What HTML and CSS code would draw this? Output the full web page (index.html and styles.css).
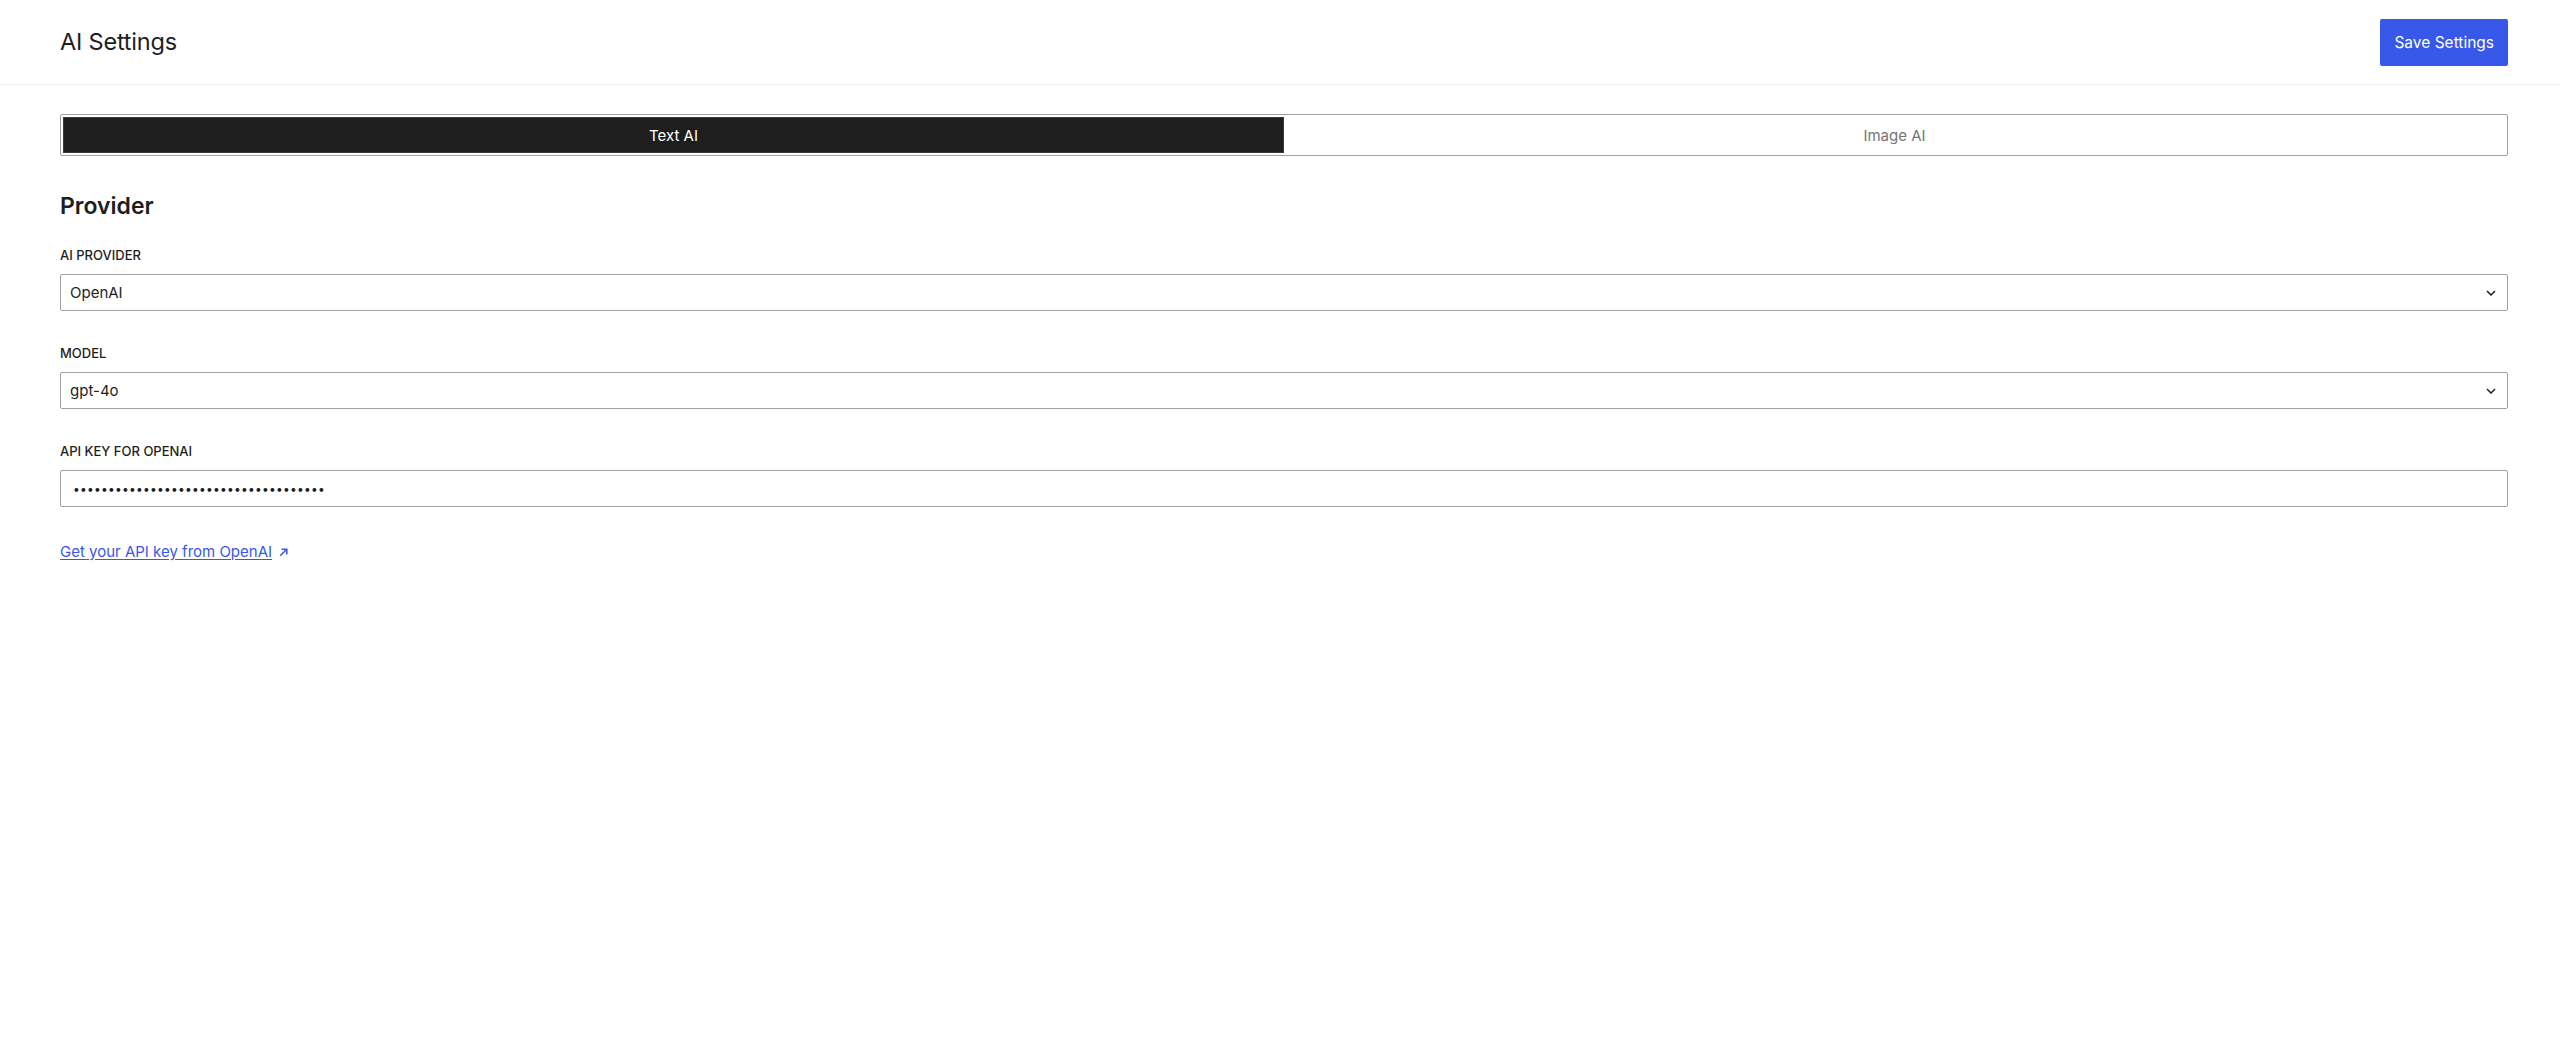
FILE: index.html
```html
<!DOCTYPE html>
<html lang="en">
<head>
<meta charset="utf-8">
<title>AI Settings</title>
<link rel="stylesheet" href="styles.css">
</head>
<body>
<header class="topbar">
  <h1 class="page-title">AI Settings</h1>
  <button class="btn-primary" type="button">Save Settings</button>
</header>
<main class="content">
  <div class="toggle-group" role="radiogroup">
    <button class="toggle-option is-active" type="button">Text AI</button>
    <button class="toggle-option" type="button">Image AI</button>
  </div>

  <h2 class="section-title">Provider</h2>

  <div class="field">
    <label class="field-label" for="provider">AI Provider</label>
    <div class="select-wrap">
      <select id="provider" class="control select">
        <option>OpenAI</option>
      </select>
      <svg class="chevron" viewBox="0 0 10 6" width="10" height="6" aria-hidden="true"><path d="M1 1l4 4 4-4" fill="none" stroke="#1e1e1e" stroke-width="1.5"/></svg>
    </div>
  </div>

  <div class="field">
    <label class="field-label" for="model">Model</label>
    <div class="select-wrap">
      <select id="model" class="control select">
        <option>gpt-4o</option>
      </select>
      <svg class="chevron" viewBox="0 0 10 6" width="10" height="6" aria-hidden="true"><path d="M1 1l4 4 4-4" fill="none" stroke="#1e1e1e" stroke-width="1.5"/></svg>
    </div>
  </div>

  <div class="field">
    <label class="field-label" for="apikey">API Key for OpenAI</label>
    <input id="apikey" class="control password" type="password" value="sk-abcdefghijklmnopqrstuvwxyz0123456">
  </div>

  <a class="ext-link" href="#">Get your API key from OpenAI<svg class="ext-icon" viewBox="0 0 10 10" width="11" height="11" aria-hidden="true"><path d="M2 8L8 2M3.2 2H8v4.8" fill="none" stroke="#3858e9" stroke-width="1.4"/></svg></a>
</main>
</body>
</html>
```

FILE: styles.css
```css
* { box-sizing: border-box; }

html, body {
  margin: 0;
  padding: 0;
  background: #ffffff;
  color: #1e1e1e;
  font-family: Inter, "Noto Sans", "Liberation Sans", sans-serif;
}

.topbar {
  height: 85px;
  display: flex;
  align-items: center;
  justify-content: space-between;
  padding: 0 52px 0 60px;
  border-bottom: 1px solid #f0f0f0;
}

.page-title {
  margin: 0;
  font-size: 23.5px;
  font-weight: 400;
  line-height: 28px;
  letter-spacing: -0.2px;
  color: #1e1e1e;
}

.btn-primary {
  height: 47px;
  padding: 0 14px;
  background: #3858e9;
  color: #ffffff;
  border: 0;
  border-radius: 2px;
  font-family: inherit;
  font-size: 15.5px;
  font-weight: 400;
  cursor: pointer;
}

.content {
  padding: 29px 52px 0 60px;
}

.toggle-group {
  display: grid;
  grid-template-columns: 1fr 1fr;
  height: 42px;
  padding: 2px;
  border: 1px solid #a0a0a0;
  border-radius: 2px;
}

.toggle-option {
  border: 0;
  background: transparent;
  font-family: inherit;
  font-size: 15px;
  color: #757575;
  border-radius: 1px;
  cursor: pointer;
}

.toggle-option.is-active {
  background: #1e1e1e;
  color: #ffffff;
  box-shadow: inset 0 0 0 1px #3a3a3a;
}

.section-title {
  margin: 36px 0 27px;
  font-size: 23px;
  font-weight: 600;
  line-height: 28px;
}

.field {
  display: flex;
  flex-direction: column;
  margin-bottom: 34px;
}

.field-label {
  font-size: 13px;
  font-weight: 500;
  line-height: 16px;
  text-transform: uppercase;
  margin-bottom: 11px;
  color: #1e1e1e;
}

.select-wrap {
  position: relative;
}

.control {
  width: 100%;
  height: 37px;
  padding: 0 9px;
  border: 1px solid #a0a0a0;
  border-radius: 2px;
  background: #ffffff;
  font-family: inherit;
  font-size: 15px;
  color: #1e1e1e;
  outline: none;
}

.select {
  appearance: none;
  -webkit-appearance: none;
  padding-right: 32px;
}

.chevron {
  position: absolute;
  right: 12px;
  top: 50%;
  margin-top: -3px;
  pointer-events: none;
}

.password {
  padding-left: 12px;
  font-size: 12px;
  letter-spacing: 0.25px;
}

.ext-link {
  display: inline-flex;
  align-items: center;
  margin-top: 1px;
  font-size: 15px;
  line-height: 20px;
  color: #3858e9;
  text-decoration: underline;
  text-underline-offset: 2px;
}

.ext-icon {
  margin-left: 6px;
}
```
